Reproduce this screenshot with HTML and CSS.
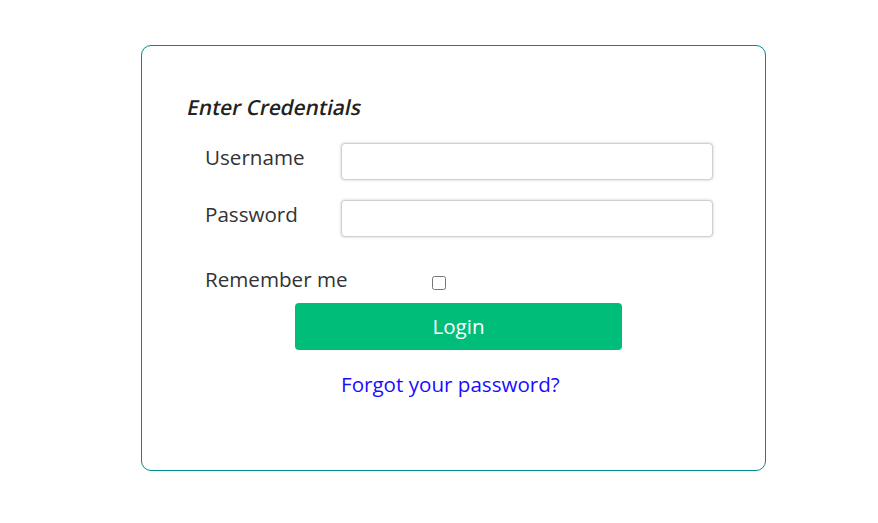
FILE: index.html
```html
<!DOCTYPE html>
<html>
<head>
<meta charset="utf-8">
<link rel="stylesheet" href="styles.css">
</head>
<body>
<div class="card">
  <h2 class="title"><span class="slant">Enter Credentials</span></h2>
  <div class="row">
    <label class="label">Username</label>
    <input class="field" type="text">
  </div>
  <div class="row">
    <label class="label">Password</label>
    <input class="field" type="password">
  </div>
  <div class="remember">
    <span class="label">Remember me</span>
    <input class="check" type="checkbox">
  </div>
  <button class="login">Login</button>
  <div class="forgot"><a href="#">Forgot your password?</a></div>
</div>
</body>
</html>
```
FILE: styles.css
```css
html, body {
  margin: 0;
  padding: 0;
  background: #ffffff;
  font-family: "Open Sans", "Noto Sans", sans-serif;
  color: #222;
}
.card {
  box-sizing: border-box;
  margin: 45px 0 0 141px;
  width: 625px;
  height: 426px;
  border: 1px solid #008b8b;
  border-radius: 10px;
  padding: 48px 0 0 45px;
}
.title {
  margin: 0;
  font-size: 20.8px;
  line-height: 26px;
  font-style: normal;
  font-weight: 600;
  color: #222;
}
.slant {
  display: inline-block;
  transform: skewX(-12deg);
  transform-origin: 0 100%;
  margin-left: -2px;
}
.row {
  display: flex;
  align-items: center;
  margin: 23px 0 0 18px;
  height: 37px;
}
.row + .row {
  margin-top: 20px;
}
.label {
  width: 136px;
  font-size: 20.6px;
  line-height: 26px;
  color: #333;
  margin-top: -10px;
}
.field {
  box-sizing: border-box;
  width: 372px;
  height: 37px;
  margin: 0;
  border: 1px solid #d0d0d0;
  border-radius: 4px;
  box-shadow: 0 0 3px rgba(0,0,0,0.2);
  background: #fff;
}
.remember {
  display: flex;
  align-items: center;
  margin: 31px 0 0 18px;
  height: 26px;
}
.remember .label {
  width: 227px;
  margin-top: -4px;
}
.check {
  margin: 4px 0 0 0;
  width: 14px;
  height: 14px;
}
.login {
  display: block;
  margin: 9px 0 0 108px;
  width: 327px;
  height: 47px;
  padding: 0 0 2px;
  border: none;
  border-radius: 4px;
  background: #00bd7a;
  color: #fff;
  font-family: "Open Sans", "Noto Sans", sans-serif;
  font-size: 20.6px;
}
.forgot {
  margin: 21px 0 0 154px;
  font-size: 20.6px;
  line-height: 26px;
}
.forgot a {
  color: #1a0dff;
  text-decoration: none;
}
```
